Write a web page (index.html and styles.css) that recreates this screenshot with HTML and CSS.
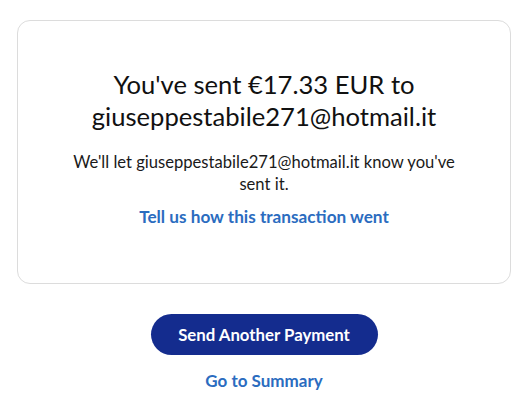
FILE: index.html
```html
<!DOCTYPE html>
<html lang="en">
<head>
<meta charset="utf-8">
<title>Payment sent</title>
<link rel="stylesheet" href="styles.css">
</head>
<body>
<main class="page">
  <section class="card">
    <h1 class="title">You've sent €17.33 EUR to giuseppestabile271@hotmail.it</h1>
    <p class="note">We'll let giuseppestabile271@hotmail.it know you've sent it.</p>
    <a class="link feedback" href="#">Tell us how this transaction went</a>
  </section>
  <div class="actions">
    <button class="primary" type="button">Send Another Payment</button>
    <a class="link summary" href="#">Go to Summary</a>
  </div>
</main>
</body>
</html>
```
FILE: styles.css
```css
* { box-sizing: border-box; }
html, body { margin: 0; padding: 0; background: #fff; }
body {
  font-family: Lato, "Open Sans", sans-serif;
  color: #1a1a1a;
  width: 520px;
  height: 417px;
  overflow: hidden;
}
.page {
  padding: 20px 9px 0 17px;
  display: flex;
  flex-direction: column;
  align-items: center;
}
.card {
  width: 494px;
  height: 264px;
  border: 1px solid #dcdcdc;
  border-radius: 13px;
  display: flex;
  flex-direction: column;
  align-items: center;
  padding: 47px 30px 0;
  text-align: center;
}
.title {
  margin: 0;
  font-size: 25.6px;
  font-weight: 400;
  line-height: 32px;
  color: #111;
}
.note {
  margin: 19px 0 0;
  font-size: 16.6px;
  line-height: 22px;
  width: 400px;
}
.link {
  color: #2b6cbf;
  font-weight: 700;
  text-decoration: none;
}
.feedback {
  margin-top: 11px;
  font-size: 17.2px;
  line-height: 22px;
}
.actions {
  display: flex;
  flex-direction: column;
  align-items: center;
  margin-top: 30px;
}
.primary {
  width: 227px;
  height: 41px;
  border: 0;
  border-radius: 21px;
  background: #142c8e;
  color: #fff;
  font-family: inherit;
  font-size: 16.8px;
  font-weight: 700;
  padding: 0;
}
.summary {
  margin-top: 15px;
  font-size: 17px;
  line-height: 22px;
}
```
